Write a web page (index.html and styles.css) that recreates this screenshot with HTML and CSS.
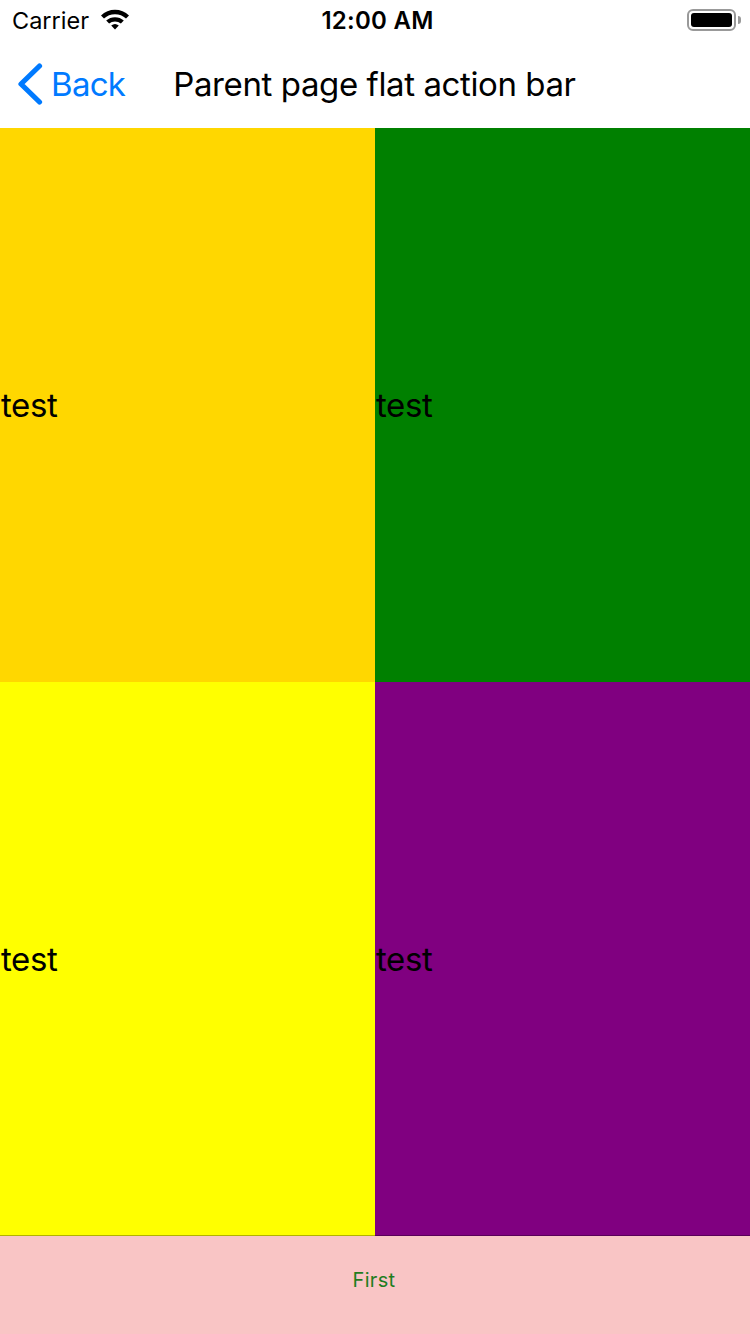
FILE: index.html
```html
<!DOCTYPE html>
<html lang="en">
<head>
    <meta charset="UTF-8">
    <meta name="viewport" content="width=device-width, initial-scale=1.0">
    <title>Parent page flat action bar</title>
    <link rel="stylesheet" href="styles.css">
</head>
<body>
    <div class="page">
        <div class="status-bar">
            <div class="status-left">
                <span class="carrier">Carrier</span>
                <svg class="wifi" width="30" height="22" viewBox="0 0 30 22">
                    <path d="M1 7.5 A20 20 0 0 1 29 7.5 L26 10.6 A16 16 0 0 0 4 10.6 Z" fill="#000"/>
                    <path d="M6.2 12.6 A13 13 0 0 1 23.8 12.6 L20.9 15.6 A9 9 0 0 0 9.1 15.6 Z" fill="#000"/>
                    <path d="M11.2 17.6 A6 6 0 0 1 18.8 17.6 L15 21.5 Z" fill="#000"/>
                </svg>
            </div>
            <span class="time">12:00 AM</span>
            <div class="status-right">
                <div class="battery"><div class="battery-level"></div></div>
                <div class="battery-cap"></div>
            </div>
        </div>
        <div class="action-bar">
            <div class="back">
                <svg class="back-icon" width="26" height="42" viewBox="0 0 26 42">
                    <path d="M22.5 3 L4 21 L22.5 39" fill="none" stroke="#007aff" stroke-width="5.2" stroke-linecap="round" stroke-linejoin="round"/>
                </svg>
                <span class="back-label">Back</span>
            </div>
            <span class="title">Parent page flat action bar</span>
        </div>
        <div class="grid">
            <div class="cell gold">test</div>
            <div class="cell green">test</div>
            <div class="cell yellow">test</div>
            <div class="cell purple">test</div>
        </div>
        <div class="tab-bar">
            <span class="tab">First</span>
        </div>
    </div>
</body>
</html>
```

FILE: styles.css
```css
html, body {
    margin: 0;
    padding: 0;
}

body {
    font-family: Inter, "Liberation Sans", sans-serif;
    background-color: #fff;
    color: #000;
}

.page {
    width: 750px;
    height: 1334px;
    display: flex;
    flex-direction: column;
    overflow: hidden;
}

.status-bar {
    height: 40px;
    display: flex;
    align-items: center;
    justify-content: space-between;
    padding: 0 9px 0 13px;
    position: relative;
}

.status-left {
    display: flex;
    align-items: center;
    gap: 11px;
    margin-left: -1px;
}

.carrier {
    font-size: 23.5px;
    font-weight: 400;
}

.wifi {
    margin-top: -2px;
}

.time {
    font-size: 24px;
    font-weight: 600;
    letter-spacing: 0.25px;
    position: absolute;
    left: 5px;
    right: 0;
    text-align: center;
}

.status-right {
    display: flex;
    align-items: center;
    gap: 2px;
}

.battery {
    width: 49px;
    height: 22px;
    border: 2px solid #999;
    border-radius: 6px;
    padding: 2px;
    box-sizing: border-box;
}

.battery-level {
    height: 100%;
    background-color: #000;
    border-radius: 3px;
}

.battery-cap {
    width: 3px;
    height: 8px;
    background-color: #999;
    border-radius: 0 3px 3px 0;
}

.action-bar {
    height: 88px;
    display: flex;
    align-items: center;
}

.back {
    display: flex;
    align-items: center;
    padding-left: 17px;
    gap: 8px;
}

.back-icon {
    display: block;
}

.back-label {
    font-size: 33px;
    color: #007aff;
    letter-spacing: -0.7px;
}

.title {
    font-size: 33px;
    font-weight: 400;
    letter-spacing: -0.4px;
    margin-left: 48px;
}

.grid {
    height: 1108px;
    display: grid;
    grid-template-columns: 1fr 1fr;
    grid-template-rows: 554px 554px;
}

.cell {
    display: flex;
    align-items: center;
    font-size: 33px;
    letter-spacing: -0.4px;
    padding-left: 1px;
}

.gold {
    background-color: #ffd700;
}

.green {
    background-color: #008000;
}

.yellow {
    background-color: #ffff00;
}

.purple {
    background-color: #800080;
}

.tab-bar {
    height: 98px;
    background-color: #f9c5c5;
    box-shadow: 0 -1px 0 rgba(0, 0, 0, 0.3);
    display: flex;
    justify-content: center;
    padding: 32px 2px 0 0;
    box-sizing: border-box;
}

.tab {
    font-size: 20px;
    color: #1f7d1f;
    line-height: 24px;
    letter-spacing: 0.3px;
}
```
